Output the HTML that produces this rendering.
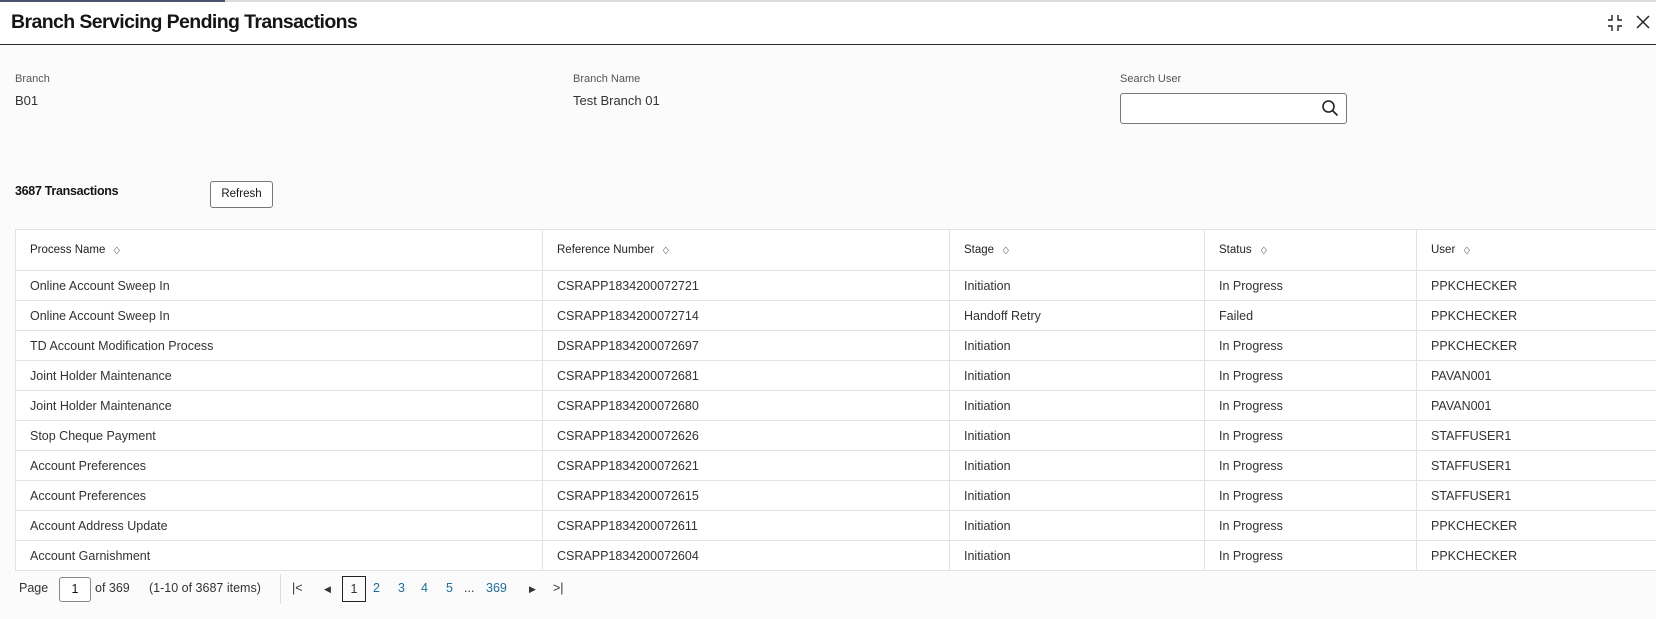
<!DOCTYPE html>
<html><head><meta charset="utf-8"><style>
*{box-sizing:border-box;margin:0;padding:0}
body{width:1656px;height:619px;overflow:hidden;background:#fbfbfb;font-family:"Liberation Sans",sans-serif;color:#161513;position:relative;font-size:12.5px}
.abs{position:absolute}
.top{left:0;top:0;width:1656px;height:45px;background:#fff;border-bottom:1.5px solid #2a2a2a}
.topline{left:0;top:0;width:225px;height:2px;background:#4a5470}
.topline2{left:225px;top:0;width:1431px;height:2px;background:#ddd}
h1{position:absolute;left:11px;top:11px;font-size:19.5px;font-weight:bold;letter-spacing:-0.6px}
.lbl{font-size:11px;color:#555}
.val{font-size:13px;color:#333}
.inp{left:1120px;top:93px;width:227px;height:31px;border:1px solid #777;border-radius:3px;background:#fff}
.btn{left:210px;top:181px;width:63px;height:27px;border:1px solid #777;border-radius:3px;background:#fff;font-size:11.5px;text-align:center;line-height:25px}
table{position:absolute;left:15px;top:229px;width:1660px;border-collapse:collapse;background:#fff}
td,th{border:1px solid #e2e2e2;font-weight:normal;text-align:left;padding:0 0 0 14px;font-size:12.5px;color:#333;height:30px}
th{height:41px;font-size:11.5px;color:#222}
.s{display:inline-block;margin-left:8px;font-size:10px;color:#555;transform:scaleX(.8)}
.pg{top:581px;font-size:12.5px;color:#333}
.pl{color:#1f6f9a}
</style></head><body>
<div class="abs top"></div><div class="abs topline"></div><div class="abs topline2"></div>
<h1>Branch Servicing Pending Transactions</h1>
<svg class="abs" style="left:1606px;top:14px" width="18" height="18" viewBox="0 0 18 18" fill="none" stroke="#222" stroke-width="1.4"><path d="M6 1v5H2M12 1v5h4M6 17v-5H2M12 17v-5h4"/></svg>
<svg class="abs" style="left:1636px;top:15px" width="14" height="14" viewBox="0 0 14 14" stroke="#222" stroke-width="1.5"><path d="M1 1l12 12M13 1L1 13"/></svg>
<div class="abs lbl" style="left:15px;top:73px">Branch</div>
<div class="abs val" style="left:15px;top:93px">B01</div>
<div class="abs lbl" style="left:573px;top:73px">Branch Name</div>
<div class="abs val" style="left:573px;top:93px">Test Branch 01</div>
<div class="abs lbl" style="left:1120px;top:73px">Search User</div>
<div class="abs inp"></div>
<svg class="abs" style="left:1321px;top:99px" width="18" height="18" viewBox="0 0 18 18" fill="none" stroke="#222" stroke-width="1.6"><circle cx="7.5" cy="7.5" r="5.5"/><path d="M11.5 11.5l5 5"/></svg>
<div class="abs" style="left:15px;top:184px;font-size:12.5px;font-weight:bold;letter-spacing:-0.3px">3687 Transactions</div>
<div class="abs btn">Refresh</div>
<table>
<colgroup><col style="width:527px"><col style="width:407px"><col style="width:255px"><col style="width:212px"><col></colgroup>
<tr><th>Process Name<span class="s">◇</span></th><th>Reference Number<span class="s">◇</span></th><th>Stage<span class="s">◇</span></th><th>Status<span class="s">◇</span></th><th>User<span class="s">◇</span></th></tr>
<tr><td>Online Account Sweep In</td><td>CSRAPP1834200072721</td><td>Initiation</td><td>In Progress</td><td>PPKCHECKER</td></tr>
<tr><td>Online Account Sweep In</td><td>CSRAPP1834200072714</td><td>Handoff Retry</td><td>Failed</td><td>PPKCHECKER</td></tr>
<tr><td>TD Account Modification Process</td><td>DSRAPP1834200072697</td><td>Initiation</td><td>In Progress</td><td>PPKCHECKER</td></tr>
<tr><td>Joint Holder Maintenance</td><td>CSRAPP1834200072681</td><td>Initiation</td><td>In Progress</td><td>PAVAN001</td></tr>
<tr><td>Joint Holder Maintenance</td><td>CSRAPP1834200072680</td><td>Initiation</td><td>In Progress</td><td>PAVAN001</td></tr>
<tr><td>Stop Cheque Payment</td><td>CSRAPP1834200072626</td><td>Initiation</td><td>In Progress</td><td>STAFFUSER1</td></tr>
<tr><td>Account Preferences</td><td>CSRAPP1834200072621</td><td>Initiation</td><td>In Progress</td><td>STAFFUSER1</td></tr>
<tr><td>Account Preferences</td><td>CSRAPP1834200072615</td><td>Initiation</td><td>In Progress</td><td>STAFFUSER1</td></tr>
<tr><td>Account Address Update</td><td>CSRAPP1834200072611</td><td>Initiation</td><td>In Progress</td><td>PPKCHECKER</td></tr>
<tr><td>Account Garnishment</td><td>CSRAPP1834200072604</td><td>Initiation</td><td>In Progress</td><td>PPKCHECKER</td></tr>
</table>
<div class="abs pg" style="left:19px">Page</div>
<div class="abs" style="left:59px;top:577px;width:32px;height:25px;border:1px solid #888;border-radius:3px;background:#fff;text-align:center;line-height:23px;font-size:12.5px">1</div>
<div class="abs pg" style="left:95px">of 369</div>
<div class="abs pg" style="left:149px">(1-10 of 3687 items)</div>
<div class="abs" style="left:280px;top:574px;width:1px;height:30px;background:#ddd"></div>
<div class="abs pg" style="left:292px">|&lt;</div>
<div class="abs pg" style="left:324px;font-size:9px;top:584px">◀</div>
<div class="abs" style="left:342px;top:576px;width:24px;height:26px;border:1px solid #222;text-align:center;line-height:24px;font-size:12.5px;color:#333">1</div>
<div class="abs pg pl" style="left:373px">2</div>
<div class="abs pg pl" style="left:398px">3</div>
<div class="abs pg pl" style="left:421px">4</div>
<div class="abs pg pl" style="left:446px">5</div>
<div class="abs pg" style="left:464px">...</div>
<div class="abs pg pl" style="left:486px">369</div>
<div class="abs pg" style="left:529px;font-size:9px;top:584px">▶</div>
<div class="abs pg" style="left:553px">&gt;|</div>
</body></html>
